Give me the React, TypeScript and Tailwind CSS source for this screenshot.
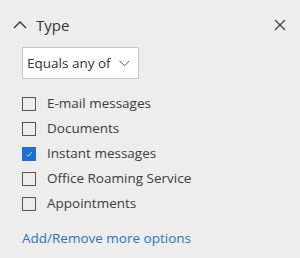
import React from "react";

const options = [
  { label: "E-mail messages", checked: false },
  { label: "Documents", checked: false },
  { label: "Instant messages", checked: true },
  { label: "Office Roaming Service", checked: false },
  { label: "Appointments", checked: false },
];

const Box = ({ checked }: { checked: boolean }) =>
  checked ? (
    <span className="flex h-[14px] w-[14px] items-center justify-center bg-[#1f6fd1]">
      <svg width="10" height="10" viewBox="0 0 10 10" fill="none">
        <path d="M2.5 5.5 L4.2 7.2 L7.8 3" stroke="#cfe0f7" strokeWidth="0.9" />
      </svg>
    </span>
  ) : (
    <span className="h-[14px] w-[14px] border border-[#555]" />
  );

export default function App() {
  return (
    <div
      className="h-[258px] w-[300px] bg-[#ededed] text-[#333]"
      style={{ fontFamily: '"Open Sans", "Noto Sans", sans-serif' }}
    >
      {/* Header */}
      <div className="flex items-center justify-between pl-[13px] pr-[14px] pt-[13px]">
        <div className="flex items-center gap-[9px]">
          <svg width="14" height="14" viewBox="0 0 14 14" fill="none">
            <path d="M1 10 L7 4 L13 10" stroke="#333" strokeWidth="1.3" />
          </svg>
          <span className="text-[15px] leading-[24px]">Type</span>
        </div>
        <svg width="12" height="12" viewBox="0 0 12 12" fill="none">
          <path d="M1 1 L11 11 M11 1 L1 11" stroke="#444" strokeWidth="1.3" />
        </svg>
      </div>

      {/* Select */}
      <div className="ml-[22px] mt-[10px] flex h-[32px] w-[117px] items-center justify-between border border-[#c6c6c6] bg-white pl-[4px] pr-[8px]">
        <span className="text-[13.5px]">Equals any of</span>
        <svg width="11" height="7" viewBox="0 0 11 7" fill="none">
          <path d="M0.5 0.8 L5.5 5.8 L10.5 0.8" stroke="#555" strokeWidth="1" />
        </svg>
      </div>

      {/* Options */}
      <div className="mt-[12px] flex flex-col pl-[22px]">
        {options.map((o) => (
          <div key={o.label} className="flex h-[25px] items-center gap-[11px]">
            <Box checked={o.checked} />
            <span className="text-[13.5px] text-[#3b3b3b]">{o.label}</span>
          </div>
        ))}
      </div>

      <div className="mt-[12px] pl-[22px] text-[13.5px] text-[#2e72c2]">
        Add/Remove more options
      </div>
    </div>
  );
}
